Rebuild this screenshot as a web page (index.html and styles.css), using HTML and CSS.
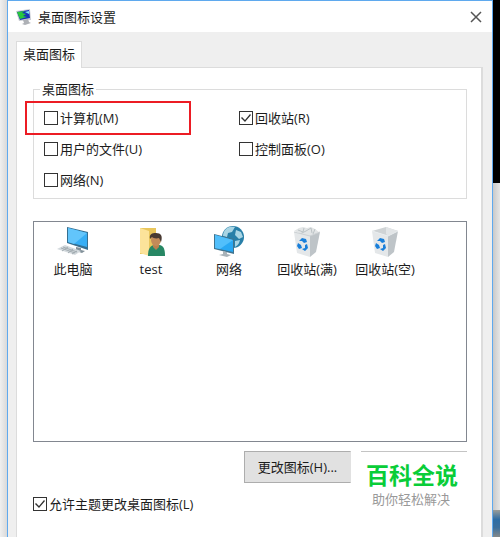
FILE: index.html
```html
<!DOCTYPE html>
<html lang="zh-CN">
<head>
<meta charset="utf-8">
<title>桌面图标设置</title>
<link rel="stylesheet" href="styles.css">
</head>
<body>
<div class="desktop">
  <div class="edge edge-left"></div>
  <main class="dialog">
    <header class="titlebar">
      <svg class="app-icon" width="18" height="18" viewBox="0 0 18 18" aria-hidden="true">
        <path d="M0 3 14 1l1 11-12 1z" fill="#c9ccd3"/>
        <path d="M1 4 13 2l1 8-10 2z" fill="#1632b8"/>
        <path d="M1 4l8-1-3 2 4 1-3 2 4 1-7 2z" fill="#28c83c"/>
        <path d="M9 4l4-1v3z" fill="#7ee8f4"/>
        <path d="M7 12l5-1 1 3 2 1-6 2-3-1 2-1z" fill="#aeb1b6"/>
      </svg>
      <h1 class="title">桌面图标设置</h1>
      <button class="close" type="button" aria-label="关闭">
        <svg width="12" height="12" viewBox="0 0 12 12" aria-hidden="true"><path d="M1 1l10 10M11 1 1 11" stroke="#555" stroke-width="1.5"/></svg>
      </button>
    </header>
    <div class="body">
      <div class="tabs" role="tablist"><button class="tab" type="button" role="tab" aria-selected="true">桌面图标</button></div>
      <section class="panel">
        <fieldset class="group">
          <legend>桌面图标</legend>
          <div class="options">
            <label class="check marked"><input type="checkbox">计算机(M)</label>
            <label class="check"><input type="checkbox" checked>回收站(R)</label>
            <label class="check"><input type="checkbox">用户的文件(U)</label>
            <label class="check"><input type="checkbox">控制面板(O)</label>
            <label class="check"><input type="checkbox">网络(N)</label>
          </div>
        </fieldset>
        <ul class="icons">
          <li>
            <svg width="34" height="32" viewBox="0 0 34 32" aria-hidden="true">
              <path d="M11 1 32 6v18L11 17z" fill="#356f91"/>
              <path d="M12 2l19 5v14L12 16z" fill="#36aef5"/>
              <path d="M12 2l19 5-13 11-6-2z" fill="#62c5fb"/>
              <path d="M20 21l5 1v2l4 1-3 2-9-3 3-1z" fill="#819099"/>
              <path d="M9 19l16 6-6 4L1 23z" fill="#d3d9dd"/>
              <path d="M7 21l14 5M5 22l14 5M12 21l-6 4M17 23l-5 4M21 25l-5 3" stroke="#a3adb2" fill="none"/>
            </svg>
            <span>此电脑</span>
          </li>
          <li>
            <svg width="34" height="32" viewBox="0 0 34 32" aria-hidden="true">
              <path d="M6 2h16v26H6z" fill="#e9c65c"/>
              <path d="M6 2l9 3v25l-9-3z" fill="#fce39a"/>
              <path d="M14 30c0-7 2-11 7-11h4c5 0 6 5 6 11z" fill="#278764"/>
              <path d="M19 18h6v3l-3 3-3-3z" fill="#b9804f"/>
              <ellipse cx="22" cy="14" rx="5" ry="6" fill="#c38b59"/>
              <path d="M16 13c-1-5 2-6 6-6 5 0 7 3 5 9l-2-4c-3 1-6 0-7-1z" fill="#493a32"/>
            </svg>
            <span>test</span>
          </li>
          <li>
            <svg width="34" height="32" viewBox="0 0 34 32" aria-hidden="true">
              <circle cx="21" cy="11" r="11" fill="#287fa8"/>
              <path d="M14 3c3-3 7-2 9-2l-3 5-4 1-1 4-4-1c0-3 1-5 3-7zM24 4l5 2 2 5-4 2-4-4zM23 15l5-1c-1 4-2 5-5 7z" fill="#a9d5e4"/>
              <path d="M2 8l20 5v15L2 23z" fill="#40748f"/>
              <path d="M3 9l18 5v12L3 22z" fill="#28a8f3"/>
              <path d="M3 9l18 5L8 23l-5-1z" fill="#51bffb"/>
              <path d="M11 25l4 1v2l4 1-4 2-8-2 4-1z" fill="#a9b3b9"/>
            </svg>
            <span>网络</span>
          </li>
          <li>
            <svg width="34" height="32" viewBox="0 0 34 32" aria-hidden="true">
              <path d="M4 5l5-3 4-1 4 1 4-1 4 2 4 3-10 5z" fill="#e2e5e6"/>
              <path d="M8 4l5 2 1-4M16 5l5-3 1 5M25 3l-2 5M10 8l6-3" stroke="#bcc3c6" fill="none"/>
              <path d="M4 6l16 4v21L7 27z" fill="#e4e7e9"/>
              <path d="M20 10l10-4-4 20-6 5z" fill="#bec4c8"/>
              <path d="M4 6l16 4 10-4" fill="none" stroke="#cbd0d3"/>
              <path d="M9 15l3-3 4 1 1 3-3 1-2-2zM8 17l3 2 1 3-3 1-2-3zM17 18l1 4-3 3-3-2 3-1v-3z" fill="#197fda"/>
            </svg>
            <span>回收站(满)</span>
          </li>
          <li>
            <svg width="34" height="32" viewBox="0 0 34 32" aria-hidden="true">
              <path d="M4 5l14-4 12 4-10 5z" fill="#cfd3d5"/>
              <path d="M18 1l12 4-10 5-2-2z" fill="#e2e5e7"/>
              <path d="M4 5l16 5v21L7 27z" fill="#e4e7e9"/>
              <path d="M20 10l10-5-4 21-6 5z" fill="#bec4c8"/>
              <path d="M4 5l16 5 10-5" fill="none" stroke="#e9edef"/>
              <path d="M9 15l3-3 4 1 1 3-3 1-2-2zM8 17l3 2 1 3-3 1-2-3zM17 18l1 4-3 3-3-2 3-1v-3z" fill="#197fda"/>
            </svg>
            <span>回收站(空)</span>
          </li>
        </ul>
        <div class="footer">
          <button class="change" type="button">更改图标(H)...</button>
          <div class="brand"><strong>百科全说</strong><span>助你轻松解决</span></div>
          <label class="check allow"><input type="checkbox" checked>允许主题更改桌面图标(L)</label>
        </div>
      </section>
    </div>
  </main>
  <div class="edge edge-right"><div class="dark"></div><div class="light"></div><div class="photo"></div></div>
</div>
</body>
</html>
```
FILE: styles.css
```css
*, ::before, ::after { box-sizing: border-box; }

body {
  margin: 0;
  color: #1c1c1c;
  font: 13px/18px "Open Sans", "Noto Sans CJK SC", sans-serif;
}

button { font: inherit; color: inherit; }

.desktop { display: flex; min-height: 100vh; }

.edge { flex: 0 0 7px; }
.edge-left { background: linear-gradient(90deg, #f0f0f0, #d9d9d9); }
.edge-right { display: flex; flex-direction: column; }
.dark { flex: 0 0 183px; background: #000; }
.light { flex: 1; background: linear-gradient(90deg, #c9c9c9, #e6e6e6); }
.photo { flex: 0 0 27px; background: linear-gradient(#9b9d98, #2e6da4 35%, #3b6f9c 65%, #85898a); }

.dialog {
  flex: 1;
  display: flex;
  flex-direction: column;
  min-width: 0;
  border: solid #5fa9ee;
  border-width: 1px 1px 0;
  background: #efefef;
}

.titlebar {
  display: flex;
  align-items: center;
  height: 31px;
  padding: 0 10px 0 8px;
  background: #fff;
}
.app-icon { margin-right: 4px; }
.title { flex: 1; margin: 0; font-size: 13px; font-weight: 400; }
.close {
  display: flex;
  padding: 0;
  border: 0;
  background: none;
}

.body {
  flex: 1;
  display: flex;
  flex-direction: column;
  padding: 9px 9px 0 8px;
}
.tabs { display: flex; }
.tab {
  position: relative;
  height: 27px;
  margin-bottom: -1px;
  padding: 0 6px 2px;
  border: 1px solid #dcdcdc;
  border-bottom: 0;
  background: #fff;
}
.panel {
  flex: 1;
  padding: 12px 14px 0 16px;
  border: solid #dcdcdc;
  border-width: 1px 2px 0 1px;
  background: #fff;
}

.group {
  min-width: 0;
  height: 119px;
  margin: 0;
  padding: 0 0 0 10px;
  border: 1px solid #dcdcdc;
}
.group legend { margin-left: -4px; padding: 0 2px; }
.options {
  display: grid;
  grid-template-columns: 195px 1fr;
  row-gap: 13px;
  padding-top: 11px;
}

.check {
  position: relative;
  display: flex;
  align-items: center;
  gap: 2px;
  justify-self: start;
}
.check input {
  appearance: none;
  display: grid;
  width: 14px;
  height: 14px;
  margin: 0;
  border: 1px solid #333;
  background: #fff;
}
.check input:checked::after {
  content: "";
  background: #333;
  clip-path: polygon(1px 6px, 2px 5px, 5px 8px, 10px 2px, 11px 3px, 5px 10px);
}
.marked::after {
  content: "";
  position: absolute;
  top: -8px;
  left: -19px;
  width: 166px;
  height: 34px;
  border: 2px solid #ec1c24;
}

.icons {
  display: grid;
  grid-template-columns: repeat(5, 78px);
  align-content: start;
  height: 221px;
  margin: 22px 0 0;
  padding: 4px 0 0;
  border: 1px solid #828790;
  list-style: none;
}
.icons li { display: flex; flex-direction: column; align-items: center; gap: 2px; }

.footer {
  display: grid;
  grid-template-columns: 1fr 107px 106px;
  grid-template-rows: 32px auto;
  column-gap: 10px;
  margin-top: 9px;
}
.change {
  grid-column: 2;
  padding: 0;
  border: 1px solid #adadad;
  border-right-color: #e1e1e1;
  background: #e1e1e1;
}
.brand {
  grid-column: 3;
  grid-row: 1 / 3;
  display: flex;
  flex-direction: column;
  padding: 9px 0 0 5px;
  border-top: 1px solid #c4c4c4;
}
.brand strong { color: #09cd38; font-size: 23px; line-height: 29px; }
.brand span { padding-left: 6px; color: #999; }
.allow { grid-column: 1 / 3; grid-row: 2; align-self: start; margin-top: 12px; }
```
